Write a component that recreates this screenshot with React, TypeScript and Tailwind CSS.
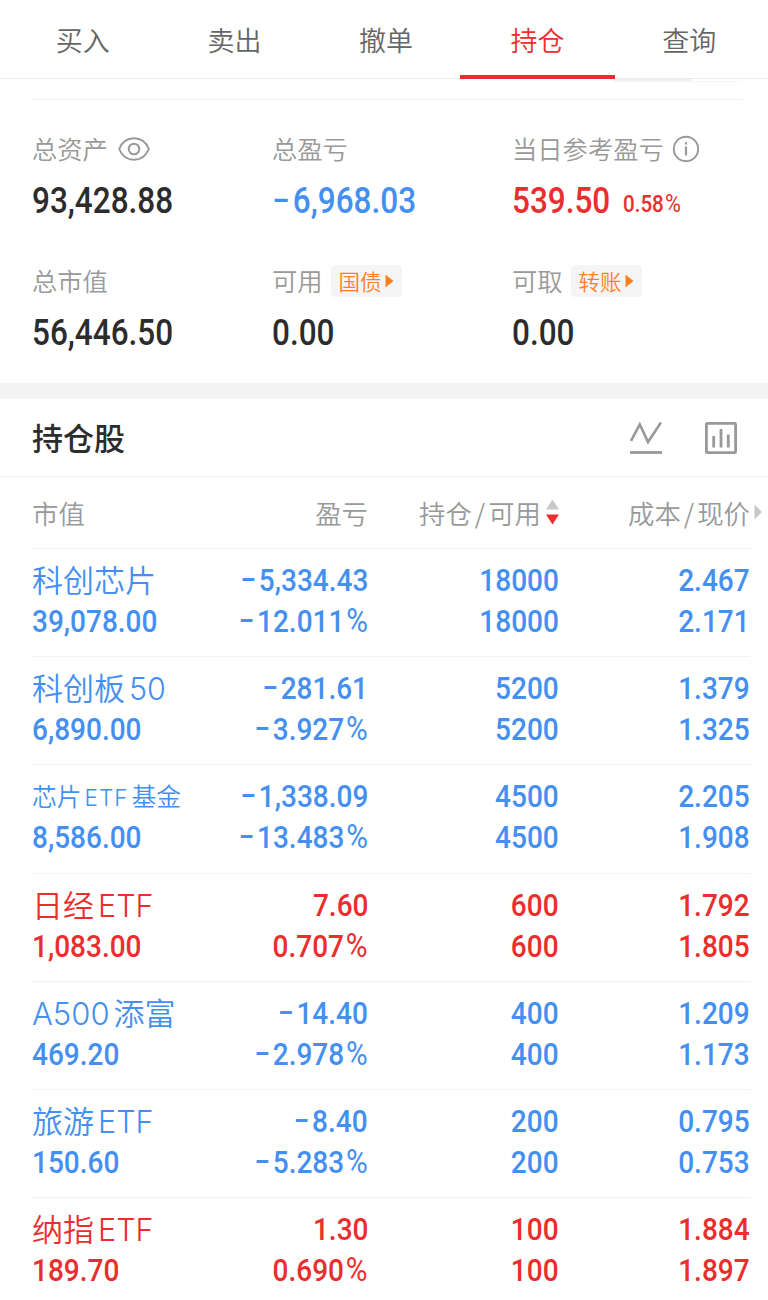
import clsx from 'clsx';

interface Holding {
  name: string;
  latin?: string;
  tail?: string;
  latinFirst?: boolean;
  small?: boolean;
  up?: boolean;
  value: string;
  profit: string;
  rate: string;
  amount: string;
  cost: string;
  price: string;
}

const tabs = ['买入', '卖出', '撤单', '持仓', '查询'];

const holdings: Holding[] = [
  { name: '科创芯片', value: '39,078.00', profit: '−5,334.43', rate: '−12.011%', amount: '18000', cost: '2.467', price: '2.171' },
  { name: '科创板', latin: '50', value: '6,890.00', profit: '−281.61', rate: '−3.927%', amount: '5200', cost: '1.379', price: '1.325' },
  { name: '芯片', latin: 'ETF', tail: '基金', small: true, value: '8,586.00', profit: '−1,338.09', rate: '−13.483%', amount: '4500', cost: '2.205', price: '1.908' },
  { name: '日经', latin: 'ETF', up: true, value: '1,083.00', profit: '7.60', rate: '0.707%', amount: '600', cost: '1.792', price: '1.805' },
  { name: '添富', latin: 'A500', latinFirst: true, value: '469.20', profit: '−14.40', rate: '−2.978%', amount: '400', cost: '1.209', price: '1.173' },
  { name: '旅游', latin: 'ETF', value: '150.60', profit: '−8.40', rate: '−5.283%', amount: '200', cost: '0.795', price: '0.753' },
  { name: '纳指', latin: 'ETF', up: true, value: '189.70', profit: '1.30', rate: '0.690%', amount: '100', cost: '1.884', price: '1.897' },
];

const EyeIcon = () => (
  <svg width="32" height="24" viewBox="0 0 32 24" fill="none" stroke="#999" strokeWidth="2">
    <path d="M1.200 12C4 5 9.500 1.300 16 1.300S28 5 30.800 12C28 19 22.500 22.700 16 22.700S4 19 1.200 12Z" />
    <circle cx="16" cy="12" r="5.300" />
  </svg>
);

const InfoIcon = () => (
  <svg width="28" height="28" viewBox="0 0 28 28" fill="none" stroke="#999" strokeWidth="1.900">
    <circle cx="14" cy="14" r="12.200" />
    <path d="M14 11.500v9M14 7.300v2.200" strokeWidth="2.200" />
  </svg>
);

const LineChartIcon = () => (
  <svg width="32" height="34" viewBox="0 0 32 34" fill="none" stroke="#999" strokeWidth="2.600">
    <path d="M1 20L9.800 3.500L18 21L31 1.500" />
    <path d="M0 31.500H32" strokeWidth="2.800" />
  </svg>
);

const BarChartIcon = () => (
  <svg width="32" height="32" viewBox="0 0 32 32" fill="none" stroke="#999" strokeWidth="2.800">
    <rect x="1.400" y="1.400" width="29.200" height="29.200" rx="0.800" />
    <path d="M8.700 14v11.500M16 7v18.500M23.300 12.500v13" />
  </svg>
);

interface NumProps {
  children: string;
  right?: boolean;
  className?: string;
}

// Roboto squeezed a little, reads like the DIN digits of trading apps
const Num = ({ children, right, className }: NumProps) => {
  const negative = children.startsWith('−');
  const percent = children.endsWith('%');
  const digits = children.replace('−', '').replace('%', '');
  return (
    <span
      className={clsx(
        "inline-block scale-x-[0.875] whitespace-nowrap font-['Roboto','Liberation_Sans',sans-serif] font-medium",
        right ? 'origin-right' : 'origin-left',
        className
      )}
    >
      {negative && <span className="mr-[0.1em]">−</span>}
      {digits}
      {percent && <span className="ml-[0.06em] text-[1.06em] leading-none font-normal">%</span>}
    </span>
  );
};

const TagButton = ({ label }: { label: string }) => (
  <button className="ml-2 flex h-8 w-[71px] items-center rounded bg-[#f5f5f5] pl-2 text-[21.5px] font-[350] text-[#ff7f1e]">
    {label}
    <svg className="ml-[3px]" width="9" height="14" viewBox="0 0 9 14">
      <path d="M0.500 0.500L8.500 7L0.500 13.500Z" fill="#ff7f1e" />
    </svg>
  </button>
);

interface StatProps {
  label: string;
  value: string;
  color?: string;
  extra?: React.ReactNode;
  note?: string;
}

const Stat = ({ label, value, color = 'text-[#2c2c2c]', extra, note }: StatProps) => (
  <div className="w-60">
    <div className="flex h-8 items-center text-[25.3px] font-[350] text-[#999]">
      <span className="whitespace-nowrap">{label}</span>
      {extra}
    </div>
    <div className={clsx('mt-[12px] flex h-[49px] items-start', color)}>
      <Num className="text-[36px] leading-[48px]">{value}</Num>
      {note && <Num className="-ml-px mt-[7px] text-[23.5px] leading-[40px]">{note}</Num>}
    </div>
  </div>
);

const HoldingName = ({ item }: { item: Holding }) => {
  const latin = item.latin && (
    <span
      className={clsx(
        "font-['Inter','Liberation_Sans',sans-serif] font-[350]",
        item.small ? 'mx-[3px] text-[22.5px] tracking-[1px]' : item.latinFirst ? 'mr-1 text-[31px]' : 'ml-1 text-[30.5px]'
      )}
    >
      {item.latin}
    </span>
  );
  return (
    <div className={clsx('pt-0.5 whitespace-nowrap font-[350]', item.small ? 'text-[24.8px]' : 'text-[31px]')}>
      {item.latinFirst && latin}
      {item.name}
      {!item.latinFirst && latin}
      {item.tail}
    </div>
  );
};

const HoldingRow = ({ item }: { item: Holding }) => (
  <div
    className={clsx(
      'ml-8 mr-[18px] grid h-[108.2px] grid-cols-[150px_186px_191px_191px] grid-rows-[41px_41px] border-t border-[#f3f3f3] pt-[7px] text-[32px] leading-[42px]',
      item.up ? 'text-[#ea2e2e]' : 'text-[#448ff0]'
    )}
  >
    <HoldingName item={item} />
    <div className="text-right"><Num right>{item.profit}</Num></div>
    <div className="text-right"><Num right>{item.amount}</Num></div>
    <div className="text-right"><Num right>{item.cost}</Num></div>
    <div><Num>{item.value}</Num></div>
    <div className="text-right"><Num right>{item.rate}</Num></div>
    <div className="text-right"><Num right>{item.amount}</Num></div>
    <div className="text-right"><Num right>{item.price}</Num></div>
  </div>
);

const App = () => {
  return (
    <div className="h-[1300px] w-[768px] overflow-hidden bg-white font-['Noto_Sans_CJK_SC',sans-serif]">
      {/* Tabs */}
      <nav className="flex h-[79px] border-b border-[#ececec] pl-[7px]">
        {tabs.map((tab) => (
          <a
            key={tab}
            className={clsx(
              'relative flex h-[79px] w-[151.6px] shrink-0 items-center justify-center text-[27px] leading-[79px] font-[350]',
              tab === '持仓' ? 'text-[#ea2e2e]' : 'text-[#666]'
            )}
          >
            {tab}
            {tab === '持仓' && <span className="absolute -left-[2px] bottom-0 h-1 w-[155px] bg-[#ea2e2e]" />}
          </a>
        ))}
      </nav>

      {/* Account summary */}
      <section className="h-[304px]">
        <div className="mr-[26px] ml-8 h-[21px] border-b border-[#f2f2f2]">
          <div className="ml-auto flex h-[3px] w-32 overflow-hidden rounded-b border-b border-[#f5f5f5]">
            <div className="w-[77px] bg-[#efefef]" />
          </div>
        </div>
        <div className="flex pt-[33px] pl-8">
          <Stat label="总资产" value="93,428.88" extra={<span className="ml-[10px]"><EyeIcon /></span>} />
          <Stat label="总盈亏" value="−6,968.03" color="text-[#448ff0]" />
          <Stat label="当日参考盈亏" value="539.50" color="text-[#ea2e2e]" note="0.58%" extra={<span className="ml-2"><InfoIcon /></span>} />
        </div>
        <div className="flex pt-[39px] pl-8">
          <Stat label="总市值" value="56,446.50" />
          <Stat label="可用" value="0.00" extra={<TagButton label="国债" />} />
          <Stat label="可取" value="0.00" extra={<TagButton label="转账" />} />
        </div>
      </section>

      <div className="h-4 bg-[#f4f4f4]" />

      {/* Holdings */}
      <section>
        <header className="flex h-[78px] items-center border-b border-[#f0f0f0] pr-[31px] pl-8 text-[#2c2c2c]">
          <h2 className="text-[31px] font-medium">持仓股</h2>
          <div className="ml-auto flex items-center gap-[43px]">
            <LineChartIcon />
            <BarChartIcon />
          </div>
        </header>
        <div className="grid h-[71px] grid-cols-[150px_186px_192px_208px] items-center pl-8 text-[26.4px] font-[350] text-[#999]">
          <div>市值</div>
          <div className="text-right">盈亏</div>
          <div className="flex items-center justify-end">
            持仓<span className="mx-[3px]">/</span>可用
            <svg className="ml-1" width="15" height="26" viewBox="0 0 15 26">
              <path d="M7.500 0.500L14 10.500H1Z" fill="#c8c8c8" />
              <path d="M7.500 25.500L14 15.500H1Z" fill="#ea2e2e" />
            </svg>
          </div>
          <div className="flex items-center justify-end pr-[5px]">
            成本<span className="mx-[3px]">/</span>现价
            <svg className="ml-1" width="9" height="16" viewBox="0 0 9 16">
              <path d="M0.500 0.500L8 8L0.500 15.500Z" fill="#c8c8c8" />
            </svg>
          </div>
        </div>
        {holdings.map((item) => (
          <HoldingRow key={item.value} item={item} />
        ))}
      </section>
    </div>
  );
};

export default App;
